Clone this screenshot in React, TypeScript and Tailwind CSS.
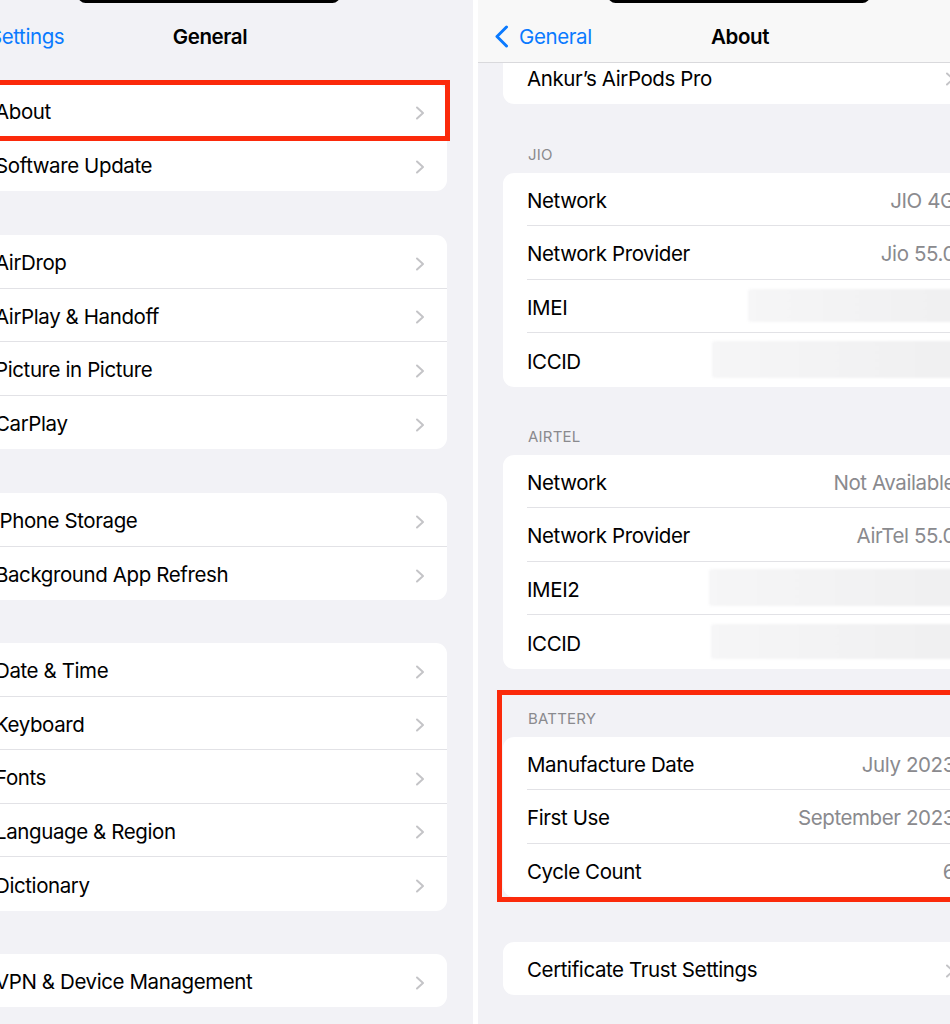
import React from "react";

const FONT = { fontFamily: 'Inter, "Noto Sans", sans-serif' };

function Chevron() {
  return (
    <svg width="10" height="16" viewBox="0 0 10 16" className="ml-auto shrink-0">
      <path d="M2 2.5 L8 8 L2 13.5" fill="none" stroke="#c4c4c7" strokeWidth="2" strokeLinecap="round" strokeLinejoin="round" />
    </svg>
  );
}

function Blur({ w, h }: { w: number; h: number }) {
  return (
    <div
      className="ml-auto shrink-0 rounded-[3px] bg-gradient-to-r from-[#f6f6f7] to-[#efeff0] blur-[1px] -mr-[30px] -mt-[5px]"
      style={{ width: w, height: h }}
    />
  );
}

type Row = { label: string; value?: string; chevron?: boolean; blur?: [number, number] };

function Card({ rows, left = false }: { rows: Row[]; left?: boolean }) {
  return (
    <div className="mx-[25px] overflow-hidden rounded-[11px] bg-white">
      {rows.map((r, i) => (
        <div key={i} className={"flex h-[53.5px] items-center " + (left ? "pl-[22px]" : "pl-[24px]")}>
          <div
            className={
              "flex h-full flex-1 items-center gap-3 pr-[22px] pt-[5px] " +
              (i < rows.length - 1 ? "border-b border-[#e2e2e6]" : "")
            }
          >
            <span className="whitespace-nowrap text-[20.5px] tracking-[-0.4px] text-black">{r.label}</span>
            {r.value !== undefined && (
              <span className="ml-auto whitespace-nowrap text-[20.5px] tracking-[-0.4px] text-[#8a8a8e]">{r.value}</span>
            )}
            {r.blur && <Blur w={r.blur[0]} h={r.blur[1]} />}
            {r.chevron && <Chevron />}
          </div>
        </div>
      ))}
    </div>
  );
}

function Header({ text, h = 68 }: { text: string; h?: number }) {
  return (
    <div className="flex items-end pb-[9px] pl-[50px]" style={{ height: h }}>
      <span className="text-[15px] leading-[18px] tracking-[0.2px] text-[#8a8a8e]">{text}</span>
    </div>
  );
}

function Notch() {
  return <div className="absolute left-[130px] top-[-12px] z-20 h-[15px] w-[262px] rounded-[9px] bg-black" />;
}

function LeftScreen() {
  const c = (label: string): Row => ({ label, chevron: true });
  return (
    <div className="relative h-[1024px] w-[473px] shrink-0 overflow-hidden bg-[#f2f2f6]">
      <div className="relative ml-[-52px] w-[524px]">
        <Notch />
        <div className="relative flex h-[62px] items-center justify-center">
          <span className="absolute left-[41px] top-[24px] text-[20.5px] leading-[26px] tracking-[-0.4px] text-[#0a7aff]">Settings</span>
          <span className="mt-[11px] text-[20.5px] font-semibold leading-[26px] tracking-[-0.4px] text-black">General</span>
        </div>
        <div className="h-[22px]" />
        <Card left rows={[c("About"), c("Software Update")]} />
        <div className="h-[44px]" />
        <Card left rows={[c("AirDrop"), c("AirPlay & Handoff"), c("Picture in Picture"), c("CarPlay")]} />
        <div className="h-[44px]" />
        <Card left rows={[c("iPhone Storage"), c("Background App Refresh")]} />
        <div className="h-[43px]" />
        <Card left rows={[c("Date & Time"), c("Keyboard"), c("Fonts"), c("Language & Region"), c("Dictionary")]} />
        <div className="h-[43px]" />
        <Card left rows={[c("VPN & Device Management")]} />
      </div>
      <div className="absolute left-[-20px] top-[80px] h-[61px] w-[470px] border-[5px] border-[#fb2a0b]" />
    </div>
  );
}

function RightScreen() {
  return (
    <div className="relative h-[1024px] w-[472px] shrink-0 overflow-hidden bg-[#f2f2f6]">
      <div className="relative w-[524px]">
        <Notch />
        <div className="absolute left-0 top-0 z-10 flex h-[63px] w-full items-center justify-center border-b border-[#d9d9dc] bg-[#f8f8f8]">
          <div className="absolute left-[16px] top-[25px] flex items-center">
            <svg width="15" height="23" viewBox="0 0 15 23">
              <path d="M12.5 2 L3 11.5 L12.5 21" fill="none" stroke="#0a7aff" strokeWidth="3" strokeLinecap="round" strokeLinejoin="round" />
            </svg>
          </div>
          <span className="absolute left-[41px] top-[24px] text-[20.5px] leading-[26px] tracking-[-0.4px] text-[#0a7aff]">General</span>
          <span className="mt-[11px] text-[20.5px] font-semibold leading-[26px] tracking-[-0.4px] text-black">About</span>
        </div>
        <div className="h-[50px]" />
        <Card rows={[{ label: "Ankur’s AirPods Pro", chevron: true }]} />
        <Header text="JIO" h={69} />
        <Card
          rows={[
            { label: "Network", value: "JIO 4G" },
            { label: "Network Provider", value: "Jio 55.0" },
            { label: "IMEI", blur: [237, 33] },
            { label: "ICCID", blur: [273, 37] },
          ]}
        />
        <Header text="AIRTEL" />
        <Card
          rows={[
            { label: "Network", value: "Not Available" },
            { label: "Network Provider", value: "AirTel 55.0" },
            { label: "IMEI2", blur: [276, 37] },
            { label: "ICCID", blur: [274, 35] },
          ]}
        />
        <Header text="BATTERY" />
        <Card
          rows={[
            { label: "Manufacture Date", value: "July 2023" },
            { label: "First Use", value: "September 2023" },
            { label: "Cycle Count", value: "6" },
          ]}
        />
        <div className="h-[44.5px]" />
        <Card rows={[{ label: "Certificate Trust Settings", chevron: true }]} />
      </div>
      <div className="absolute left-[19px] top-[690px] h-[212px] w-[500px] border-[5px] border-[#fb2a0b]" />
    </div>
  );
}

export default function App() {
  return (
    <div className="flex h-[1024px] w-[950px] overflow-hidden bg-white" style={FONT}>
      <LeftScreen />
      <div className="w-[5px] shrink-0 bg-white" />
      <RightScreen />
    </div>
  );
}
